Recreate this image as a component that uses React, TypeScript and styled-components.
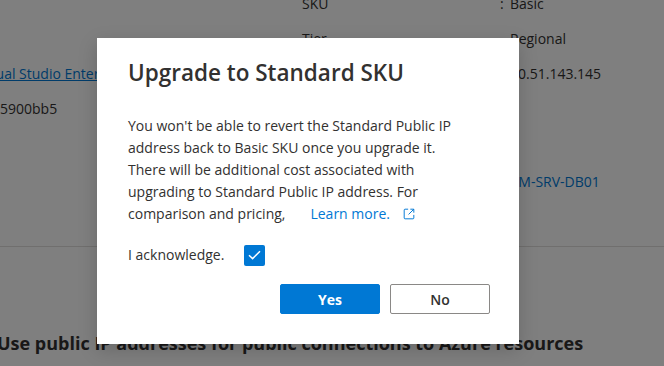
import React from "react";
import styled, { createGlobalStyle } from "styled-components";

const GlobalStyle = createGlobalStyle`
  html, body {
    margin: 0;
    padding: 0;
    background: #ffffff;
  }
  body {
    font-family: "Segoe UI", "Open Sans", "Noto Sans", sans-serif;
    color: #323130;
  }
`;

const Page = styled.div`
  position: relative;
  width: 664px;
  height: 366px;
  overflow: hidden;
  background: #ffffff;
`;

const Essentials = styled.div`
  display: grid;
  grid-template-columns: 302px 198px 10px 1fr;
  grid-auto-rows: 20px;
  row-gap: 15px;
  margin-top: -6px;
  font-size: 14px;
  line-height: 20px;
  white-space: nowrap;
`;

const Cell = styled.div<{ $col: number; $row: number; $shift?: number; $drop?: number }>`
  grid-column: ${(p) => p.$col};
  grid-row: ${(p) => p.$row};
  margin-left: ${(p) => p.$shift || 0}px;
  margin-top: ${(p) => p.$drop || 0}px;
  color: #323130;
`;

const PageLink = styled.a<{ $underline?: boolean }>`
  color: #0078d4;
  text-decoration: ${(p) => (p.$underline ? "underline" : "none")};
`;

const Divider = styled.hr`
  margin: 57px 0 0;
  border: none;
  border-top: 1px solid #e1dfdd;
`;

const SectionTitle = styled.h2`
  margin: 84px 0 0 -3px;
  font-size: 18px;
  line-height: 24px;
  font-weight: 700;
  white-space: nowrap;
  color: #323130;
`;

const Overlay = styled.div`
  position: absolute;
  inset: 0;
  background: rgba(0, 0, 0, 0.5);
  padding: 38px 0 0 97px;
`;

const Dialog = styled.div`
  width: 422px;
  height: 306px;
  box-sizing: border-box;
  background: #ffffff;
  padding: 20px 29px 30px 31px;
  display: flex;
  flex-direction: column;
  box-shadow: 0 6px 18px rgba(0, 0, 0, 0.18);
`;

const Title = styled.h1`
  margin: 0;
  font-size: 22.5px;
  line-height: 30px;
  font-weight: 600;
  color: #323130;
`;

const Body = styled.p`
  margin: 27px 0 0;
  font-size: 14px;
  line-height: 22px;
  color: #323130;
  white-space: nowrap;
`;

const LearnMore = styled.a`
  color: #0078d4;
  text-decoration: none;
  margin-left: 25px;
  display: inline-flex;
  align-items: center;
  gap: 12px;
`;

const AckRow = styled.label`
  margin-top: 19px;
  display: flex;
  align-items: center;
  gap: 20px;
  font-size: 14px;
  line-height: 22px;
`;

const CheckBox = styled.span`
  width: 21px;
  height: 21px;
  border-radius: 2px;
  background: #0078d4;
  display: flex;
  align-items: center;
  justify-content: center;
`;

const Actions = styled.div`
  margin-top: auto;
  display: flex;
  justify-content: flex-end;
  gap: 10px;
`;

const Button = styled.button<{ $primary?: boolean }>`
  width: 100px;
  height: 30px;
  box-sizing: border-box;
  border-radius: 2px;
  font-family: inherit;
  font-size: 14px;
  font-weight: ${(p) => (p.$primary ? 700 : 600)};
  cursor: pointer;
  background: ${(p) => (p.$primary ? "#0078d4" : "#ffffff")};
  color: ${(p) => (p.$primary ? "#ffffff" : "#323130")};
  border: 1px solid ${(p) => (p.$primary ? "#0078d4" : "#8a8886")};
`;

const ExternalIcon = () => (
  <svg width="14" height="14" viewBox="0 0 16 16" fill="none">
    <path
      d="M7 2.5H3.5a1 1 0 0 0-1 1v9a1 1 0 0 0 1 1h9a1 1 0 0 0 1-1V9"
      stroke="#0078d4"
      strokeWidth="1.1"
    />
    <path d="M9.5 2.5h4v4M13.5 2.5L7.5 8.5" stroke="#0078d4" strokeWidth="1.1" />
  </svg>
);

const CheckMark = () => (
  <svg width="13" height="10" viewBox="0 0 13 10" fill="none">
    <path d="M1 5.2l3.6 3.4L12 1.2" stroke="#ffffff" strokeWidth="1.5" />
  </svg>
);

export default function App() {
  return (
    <Page>
      <GlobalStyle />
      <Essentials>
        <Cell $col={2} $row={1}>SKU</Cell>
        <Cell $col={3} $row={1}>:</Cell>
        <Cell $col={4} $row={1}>Basic</Cell>
        <Cell $col={2} $row={2}>Tier</Cell>
        <Cell $col={4} $row={2}>Regional</Cell>
        <Cell $col={1} $row={3} $shift={-23}>
          <PageLink $underline href="#">Visual Studio Enterprise</PageLink>
        </Cell>
        <Cell $col={4} $row={3}>20.51.143.145</Cell>
        <Cell $col={1} $row={4}>5900bb5</Cell>
        <Cell $col={4} $row={6} $drop={3}>
          <PageLink href="#">VM-SRV-DB01</PageLink>
        </Cell>
      </Essentials>
      <Divider />
      <SectionTitle>Use public IP addresses for public connections to Azure resources</SectionTitle>

      <Overlay>
        <Dialog role="dialog">
          <Title>Upgrade to Standard SKU</Title>
          <Body>
            You won't be able to revert the Standard Public IP
            <br />
            address back to Basic SKU once you upgrade it.
            <br />
            There will be additional cost associated with
            <br />
            upgrading to Standard Public IP address. For
            <br />
            comparison and pricing,
            <LearnMore href="#">
              Learn more.
              <ExternalIcon />
            </LearnMore>
          </Body>
          <AckRow>
            I acknowledge.
            <CheckBox>
              <CheckMark />
            </CheckBox>
          </AckRow>
          <Actions>
            <Button $primary>Yes</Button>
            <Button>No</Button>
          </Actions>
        </Dialog>
      </Overlay>
    </Page>
  );
}
